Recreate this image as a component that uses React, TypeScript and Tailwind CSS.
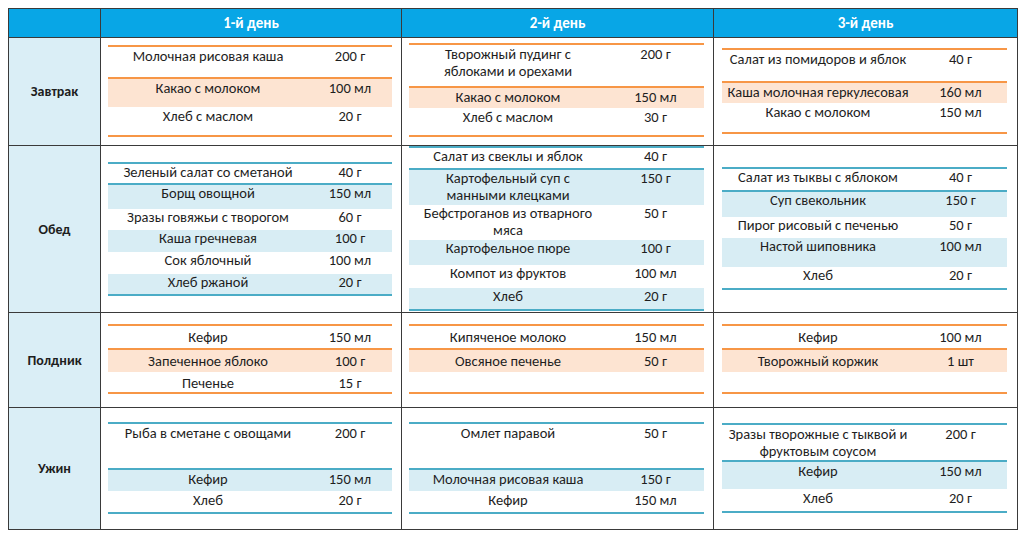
import React from 'react';

type Row = { n: string; a: string; h: string; s?: boolean };
type Box = { gap: string; rows: Row[] };

const font = { fontFamily: 'Carlito, Calibri, Roboto, "Noto Sans", sans-serif' };

const meals: { label: string; row: string; theme: 'o' | 'b'; pad: string; days: Box[] }[] = [
  {
    label: 'Завтрак',
    row: 'h-[108px]',
    theme: 'o',
    pad: 'pt-[1px]',
    days: [
      {
        gap: 'mt-[7px]',
        rows: [
          { n: 'Молочная рисовая каша', a: '200 г', h: 'h-[32px]' },
          { n: 'Какао с молоком', a: '100 мл', h: 'h-[28px]', s: true },
          { n: 'Хлеб с маслом', a: '20 г', h: 'h-[28px]' },
        ],
      },
      {
        gap: 'mt-[5px]',
        rows: [
          { n: 'Творожный пудинг с\nяблоками и орехами', a: '200 г', h: 'h-[43px]' },
          { n: 'Какао с молоком', a: '150 мл', h: 'h-[20px]', s: true },
          { n: 'Хлеб с маслом', a: '30 г', h: 'h-[27px]' },
        ],
      },
      {
        gap: 'mt-[10px]',
        rows: [
          { n: 'Салат из помидоров и яблок', a: '40 г', h: 'h-[33px]' },
          { n: 'Каша молочная геркулесовая', a: '160 мл', h: 'h-[20px]', s: true },
          { n: 'Какао с молоком', a: '150 мл', h: 'h-[29px]' },
        ],
      },
    ],
  },
  {
    label: 'Обед',
    row: 'h-[167px]',
    theme: 'b',
    pad: 'pt-0',
    days: [
      {
        gap: 'mt-[16px]',
        rows: [
          { n: 'Зеленый салат со сметаной', a: '40 г', h: 'h-[21px]' },
          { n: 'Борщ овощной', a: '150 мл', h: 'h-[24px]', s: true },
          { n: 'Зразы говяжьи с творогом', a: '60 г', h: 'h-[21px]' },
          { n: 'Каша гречневая', a: '100 г', h: 'h-[22px]', s: true },
          { n: 'Сок яблочный', a: '100 мл', h: 'h-[22px]' },
          { n: 'Хлеб ржаной', a: '20 г', h: 'h-[20px]', s: true },
        ],
      },
      {
        gap: 'mt-0',
        rows: [
          { n: 'Салат из свеклы и яблок', a: '40 г', h: 'h-[22px]' },
          { n: 'Картофельный суп с\nманными клецками', a: '150 г', h: 'h-[35px]', s: true },
          { n: 'Бефстроганов из отварного\nмяса', a: '50 г', h: 'h-[35px]' },
          { n: 'Картофельное пюре', a: '100 г', h: 'h-[25px]', s: true },
          { n: 'Компот из фруктов', a: '100 мл', h: 'h-[23px]' },
          { n: 'Хлеб', a: '20 г', h: 'h-[21px]', s: true },
        ],
      },
      {
        gap: 'mt-[21px]',
        rows: [
          { n: 'Салат из тыквы с яблоком', a: '40 г', h: 'h-[23px]' },
          { n: 'Суп свекольник', a: '150 г', h: 'h-[25px]', s: true },
          { n: 'Пирог рисовый с печенью', a: '50 г', h: 'h-[21px]' },
          { n: 'Настой шиповника', a: '100 мл', h: 'h-[29px]', s: true },
          { n: 'Хлеб', a: '20 г', h: 'h-[21px]' },
        ],
      },
    ],
  },
  {
    label: 'Полдник',
    row: 'h-[95px]',
    theme: 'o',
    pad: 'pt-[3px]',
    days: [
      {
        gap: 'mt-[11px]',
        rows: [
          { n: 'Кефир', a: '150 мл', h: 'h-[24px]' },
          { n: 'Запеченное яблоко', a: '100 г', h: 'h-[22px]', s: true },
          { n: 'Печенье', a: '15 г', h: 'h-[20px]' },
        ],
      },
      {
        gap: 'mt-[11px]',
        rows: [
          { n: 'Кипяченое молоко', a: '150 мл', h: 'h-[24px]' },
          { n: 'Овсяное печенье', a: '50 г', h: 'h-[22px]', s: true },
          { n: '', a: '', h: 'h-[20px]' },
        ],
      },
      {
        gap: 'mt-[11px]',
        rows: [
          { n: 'Кефир', a: '100 мл', h: 'h-[24px]' },
          { n: 'Творожный коржик', a: '1 шт', h: 'h-[22px]', s: true },
          { n: '', a: '', h: 'h-[20px]' },
        ],
      },
    ],
  },
  {
    label: 'Ужин',
    row: 'h-[122px]',
    theme: 'b',
    pad: 'pt-[1px]',
    days: [
      {
        gap: 'mt-[14px]',
        rows: [
          { n: 'Рыба в сметане с овощами', a: '200 г', h: 'h-[46px]' },
          { n: 'Кефир', a: '150 мл', h: 'h-[21px]', s: true },
          { n: 'Хлеб', a: '20 г', h: 'h-[21px]' },
        ],
      },
      {
        gap: 'mt-[14px]',
        rows: [
          { n: 'Омлет паравой', a: '50 г', h: 'h-[46px]' },
          { n: 'Молочная рисовая каша', a: '150 г', h: 'h-[21px]', s: true },
          { n: 'Кефир', a: '150 мл', h: 'h-[21px]' },
        ],
      },
      {
        gap: 'mt-[15px]',
        rows: [
          { n: 'Зразы творожные с тыквой и\nфруктовым соусом', a: '200 г', h: 'h-[37px]' },
          { n: 'Кефир', a: '150 мл', h: 'h-[27px]', s: true },
          { n: 'Хлеб', a: '20 г', h: 'h-[22px]' },
        ],
      },
    ],
  },
];

// per-day column widths and insets
const cols = [
  { cell: 'w-[301px] pl-[7px] pr-[9px]', name: 'w-[200px]' },
  { cell: 'w-[312px] pl-[7px] pr-[9px]', name: 'w-[198px]' },
  { cell: 'w-[304px] pl-[8px] pr-[10px]', name: 'w-[192px]' },
];

function Inner({ box, theme, name, pad }: { box: Box; theme: 'o' | 'b'; name: string; pad: string }) {
  const line = theme === 'o' ? 'border-[#f79646]' : 'border-[#4bacc6]';
  const shade = theme === 'o' ? 'bg-[#fde4d2]' : 'bg-[#d8edf4]';
  return (
    <div className={`${box.gap} border-y-2 ${line}`}>
      {box.rows.map((r, i) => (
        <div
          key={i}
          className={`flex ${r.h} ${pad} ${r.s ? shade : ''} ${i === 0 ? `border-b-2 ${line}` : ''}`}
        >
          <div className={`${name} shrink-0 text-center whitespace-pre-line`}>{r.n}</div>
          <div className="flex-1 text-center">{r.a}</div>
        </div>
      ))}
    </div>
  );
}

export default function App() {
  return (
    <div className="w-[1024px] h-[536px] bg-white pt-[8px] pl-[8px]" style={font}>
      <div className="w-[1010px] border-l border-t border-[#3a3a3a] text-[14.5px] leading-[17px] text-[#1e1e1e]">
        <div className="flex h-[29px] bg-[#08a6e6] text-white font-bold text-[15px]">
          <div className="w-[92px] border-r border-b border-[#3a3a3a]" />
          {['1-й день', '2-й день', '3-й день'].map((d, i) => (
            <div
              key={d}
              className={`${['w-[301px]', 'w-[312px]', 'w-[304px]'][i]} flex items-center justify-center border-r border-b border-[#3a3a3a]`}
            >
              {d}
            </div>
          ))}
        </div>
        {meals.map((m) => (
          <div key={m.label} className={`flex ${m.row}`}>
            <div className="w-[92px] flex items-center justify-center bg-[#daeef6] font-bold text-[14px] border-r border-b border-[#3a3a3a]">
              {m.label}
            </div>
            {m.days.map((b, i) => (
              <div key={i} className={`${cols[i].cell} border-r border-b border-[#3a3a3a]`}>
                <Inner box={b} theme={m.theme} name={cols[i].name} pad={m.pad} />
              </div>
            ))}
          </div>
        ))}
      </div>
    </div>
  );
}
